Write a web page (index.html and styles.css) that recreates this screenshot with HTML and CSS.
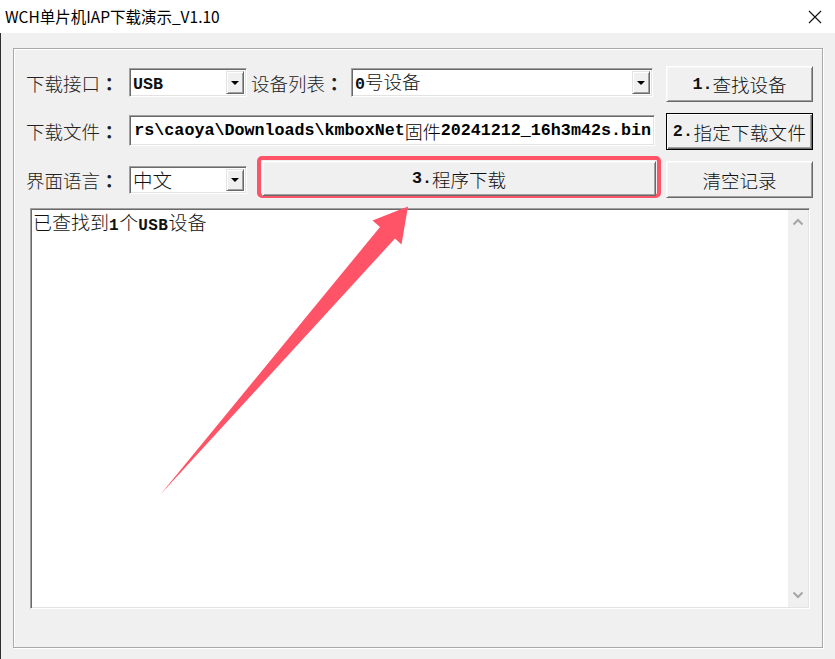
FILE: index.html
```html
<!DOCTYPE html>
<html lang="zh-CN">
<head>
<meta charset="utf-8">
<title>WCH单片机IAP下载演示_V1.10</title>
<link rel="stylesheet" href="styles.css">
</head>
<body>
<div class="window">
  <div class="titlebar">
    <span class="title">WCH单片机IAP下载演示_V1.10</span>
    <span class="close"><svg width="14" height="14" viewBox="0 0 14 14"><path d="M1 1L13 13M13 1L1 13" stroke="#111" stroke-width="1.1" fill="none"/></svg></span>
  </div>
  <div class="client">
    <div class="group">
      <div class="row row1">
        <span class="label">下载接口<span class="colon" lang="zh-TW">：</span></span>
        <div class="combo c-small">
          <span class="val"><span class="m">USB</span></span>
          <span class="drop"><i class="tri"></i></span>
        </div>
        <span class="label label2">设备列表<span class="colon" lang="zh-TW">：</span></span>
        <div class="combo c-wide">
          <span class="val"><span class="m">0</span>号设备</span>
          <span class="drop"><i class="tri"></i></span>
        </div>
        <button class="btn btn1"><span class="m">1.</span>查找设备</button>
      </div>
      <div class="row row2">
        <span class="label">下载文件<span class="colon" lang="zh-TW">：</span></span>
        <div class="edit"><span class="m">rs\caoya\Downloads\kmboxNet</span>固件<span class="m">20241212_16h3m42s.bin</span></div>
        <button class="btn btn2 default"><span class="m">2.</span>指定下载文件</button>
      </div>
      <div class="row row3">
        <span class="label label3">界面语言<span class="colon" lang="zh-TW">：</span></span>
        <div class="combo c-small c-lang">
          <span class="val">中文</span>
          <span class="drop"><i class="tri"></i></span>
        </div>
        <div class="highlight">
          <button class="btn btn3"><span class="m">3.</span>程序下载</button>
        </div>
        <button class="btn btn4">清空记录</button>
      </div>
      <div class="log">
        <div class="log-text">已查找到<span class="m sm">1</span>个<span class="m sm">USB</span>设备</div>
        <div class="vscroll">
          <svg width="12" height="8" viewBox="0 0 12 8"><path d="M1.5 6.5L6 2L10.5 6.5" stroke="#a6a6a6" stroke-width="2" fill="none"/></svg>
          <svg width="12" height="8" viewBox="0 0 12 8"><path d="M1.5 1.5L6 6L10.5 1.5" stroke="#a6a6a6" stroke-width="2" fill="none"/></svg>
        </div>
      </div>
    </div>
  </div>
  <svg class="arrow" width="835" height="659" viewBox="0 0 835 659">
    <polygon points="408,206.5 372.5,220.5 380,227 160,495 395,238.5 401.5,244.5" fill="#ff5468"/>
  </svg>
</div>
</body>
</html>
```

FILE: styles.css
```css
* { box-sizing: border-box; }
html, body {
  margin: 0;
  padding: 0;
  width: 835px;
  height: 659px;
  overflow: hidden;
  background: #f0f0f0;
  font-family: "Noto Sans CJK SC", "Noto Sans", sans-serif;
  color: #000;
}
.window {
  position: relative;
  width: 835px;
  height: 659px;
  display: flex;
  flex-direction: column;
}
.titlebar {
  height: 33px;
  background: #fff;
  display: flex;
  align-items: center;
  justify-content: space-between;
  padding-left: 5px;
}
.title {
  font-size: 15.5px;
  line-height: 33px;
  color: #000;
}
.close {
  width: 40px;
  height: 33px;
  display: flex;
  align-items: center;
  justify-content: center;
}
.client {
  flex: 1;
  border-left: 1px solid #2e2e2e;
  padding: 15px 0 0 12px;
}
.group {
  width: 810px;
  height: 600px;
  border: 1px solid #a9a9a9;
  box-shadow: inset 1px 1px 0 #fff, 1px 1px 0 #fff;
  padding: 17px 0 0 12px;
  display: flex;
  flex-direction: column;
}
.row {
  display: flex;
  align-items: flex-start;
}
.row1 { height: 36px; }
.row2 { height: 37px; margin-top: 11px; }
.row3 { height: 42px; margin-top: 6px; }
.label {
  width: 103px;
  font-size: 18.5px;
  font-weight: 300;
  line-height: 34px;
  white-space: nowrap;
  color: #222;
}
.colon {
  font-family: "Noto Sans CJK TC", "Noto Sans CJK SC", sans-serif;
  font-weight: 700;
}
.row2 .label { line-height: 36px; }
.label2 { width: 100px; margin-left: 4px; }
.label3 { line-height: 42px; margin-top: 3px; }
.m {
  font-family: "Liberation Mono", "DejaVu Sans Mono", monospace;
  font-weight: bold;
  font-size: 16.7px;
}
.m.sm { font-size: 16px; letter-spacing: 0.5px; }

/* sunken fields */
.combo, .edit {
  background: #fff;
  border: 1px solid;
  border-color: #a0a0a0 #fff #fff #a0a0a0;
  box-shadow: inset 1px 1px 0 #696969, inset -1px -1px 0 #e3e3e3;
  display: flex;
  align-items: center;
}
.combo {
  margin-top: 2px;
  height: 29px;
  padding: 2px 2px 2px 3px;
}
.c-small { width: 118px; }
.c-wide { width: 302px; }
.c-lang { margin-top: 10px; height: 28px; }
.combo .val {
  flex: 1;
  font-size: 18.5px;
  font-weight: 300;
  line-height: 22px;
  white-space: nowrap;
  color: #111;
}
.c-lang .val { font-size: 19.5px; }
.drop {
  width: 18px;
  height: 100%;
  background: #f0f0f0;
  border: 1px solid;
  border-color: #e3e3e3 #696969 #696969 #e3e3e3;
  box-shadow: inset 1px 1px 0 #fff, inset -1px -1px 0 #a0a0a0;
  display: flex;
  align-items: center;
  justify-content: center;
}
.tri {
  width: 0;
  height: 0;
  border-left: 4px solid transparent;
  border-right: 4px solid transparent;
  border-top: 4px solid #000;
}
.edit {
  margin-top: 2px;
  width: 526px;
  height: 31px;
  padding: 0 3px 0 2px;
  font-size: 18px;
  font-weight: 300;
  white-space: nowrap;
  overflow: hidden;
  justify-content: flex-end;
}

/* buttons */
.btn {
  font-family: "Noto Sans CJK SC", "Noto Sans", sans-serif;
  font-size: 18.5px;
  font-weight: 300;
  color: #111;
  background: #f0f0f0;
  width: 147px;
  padding: 0;
  margin: 0;
  border: 1px solid;
  border-color: #fff #696969 #696969 #fff;
  box-shadow: inset 1px 1px 0 #f7f7f7, inset -1px -1px 0 #a0a0a0;
  display: flex;
  align-items: center;
  justify-content: center;
  white-space: nowrap;
}
.btn1 { margin-left: 13px; height: 36px; }
.btn2 { margin-left: 11px; height: 37px; }
.default {
  border: 1px solid #000;
  box-shadow: inset 1px 1px 0 #fff, inset -1px -1px 0 #696969, inset -2px -2px 0 #a0a0a0;
  letter-spacing: 0.3px;
}
.highlight {
  margin-left: 10px;
  width: 404px;
  height: 42px;
  border: 4px solid #ff5468;
  border-radius: 5px;
  padding: 1px 1px 0 1px;
}
.btn3 {
  width: 100%;
  height: 35px;
}
.btn4 { margin-left: 5px; margin-top: 5px; height: 37px; }

/* log */
.log {
  margin-top: 10px;
  margin-left: 4px;
  width: 780px;
  height: 401px;
  background: #fff;
  border: 1px solid;
  border-color: #a0a0a0 #fff #fff #a0a0a0;
  box-shadow: inset 1px 1px 0 #696969, inset -1px -1px 0 #e3e3e3;
  display: flex;
  padding: 1px;
}
.log-text {
  flex: 1;
  padding: 0 0 0 1px;
  font-size: 19px;
  font-weight: 300;
  line-height: 24px;
  color: #111;
}
.vscroll {
  width: 20px;
  background: #f0f0f0;
  display: flex;
  flex-direction: column;
  justify-content: space-between;
  align-items: center;
  padding: 8px 0 8px;
}
.arrow {
  position: absolute;
  left: 0;
  top: 0;
  pointer-events: none;
}
```
